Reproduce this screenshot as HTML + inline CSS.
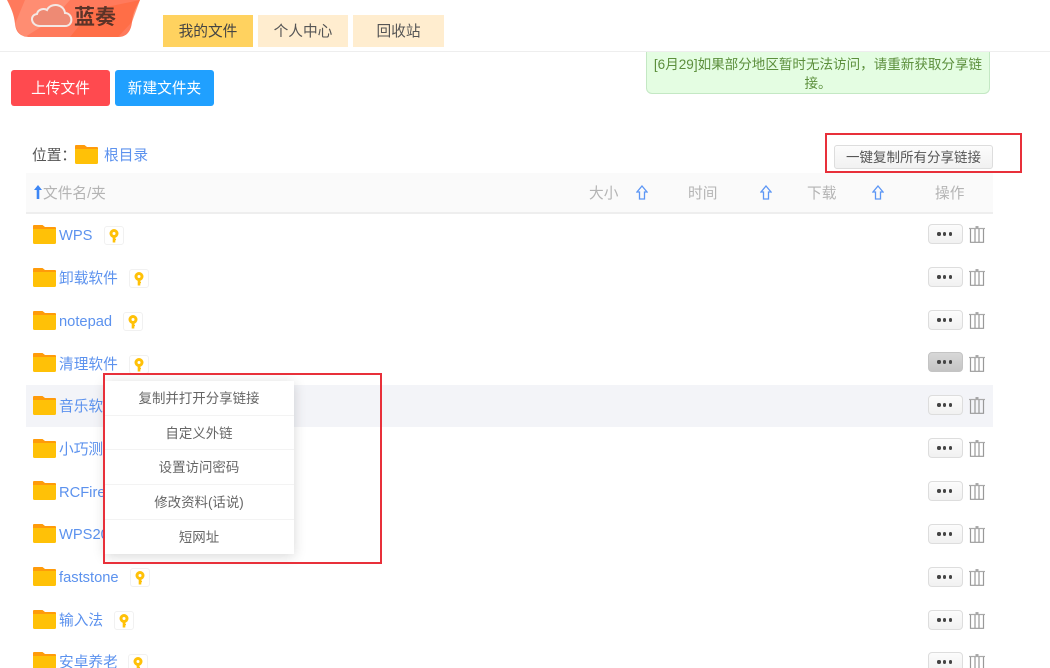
<!DOCTYPE html>
<html lang="zh">
<head>
<meta charset="utf-8">
<style>
html,body{margin:0;padding:0;width:1050px;height:668px;overflow:hidden;background:#fff}
body{position:relative;font-family:"Liberation Sans","Noto Sans CJK SC",sans-serif;font-size:14.7px;color:#444}
.a{position:absolute;white-space:nowrap}
.tab{top:15px;height:32px;line-height:35px;text-align:center;background:#ffedcf;color:#555}
.btn{top:70px;width:99px;height:36px;line-height:38px;text-align:center;color:#fff;border-radius:3px}
.th{top:185px;color:#b4b4b4;line-height:18px}
.arrow{top:185px}
.name{color:#5c92ee;line-height:18px;margin-top:1px}
.folder{left:33px}
.key{width:18px;height:17px;border:1px solid #f1f1f1;border-radius:3px;background:#fff}
.more{left:928px;width:33px;height:18px;border:1px solid #ddd;border-radius:4px;background:linear-gradient(#fcfcfc,#f1f1f1)}
.more i{position:absolute;top:7.3px;width:3.4px;height:3.4px;border-radius:50%;background:#444}
.more i:nth-child(1){left:8.3px}.more i:nth-child(2){left:14px}.more i:nth-child(3){left:20px}
.trash{left:969px}
.pop{left:105px;top:381px;width:189px;height:173px;background:#fff;box-shadow:0 2px 12px rgba(0,0,0,.16)}
.pop div{height:33.7px;line-height:35px;border-bottom:1px solid #f3f3f3;text-align:center;font-size:13.45px;color:#666;text-indent:-1px}
.pop div:last-child{border-bottom:0}
</style>
</head>
<body>
<svg width="0" height="0" style="position:absolute"><defs>
<symbol id="f" viewBox="0 0 23 19"><path d="M0 1Q0 0 1 0H9.500L12 2H22Q23 2 23 3V8H0Z" fill="#ff9b0a"/><path d="M0 4H23V17.500Q23 19 21.500 19H1.500Q0 19 0 17.500Z" fill="#ffc107"/></symbol>
<symbol id="k" viewBox="0 0 18 17"><circle cx="9" cy="6.500" r="3" fill="none" stroke="#ffc107" stroke-width="3"/><path d="M9 9V15.500" stroke="#ffc107" stroke-width="2.600"/><path d="M9 12.500H11" stroke="#ffc107" stroke-width="1.400"/></symbol>
<symbol id="t" viewBox="0 0 16 17"><path d="M0 2.500H16" fill="none" stroke="#aaa" stroke-width="1.200"/><path d="M6.500 1H9.500" fill="none" stroke="#888" stroke-width="1.400"/><path d="M1.500 3V16.300H14.500V3M6 3V16.300M10 3V16.300" fill="none" stroke="#999" stroke-width="1.200"/></symbol>
</defs></svg>

<svg class="a" style="left:0;top:0" width="145" height="40" viewBox="0 0 145 40">
<path d="M7 0H140C136 8 133 12 132 22C131 32 126 37 118 37H30C21 37 16 33 15 24C14 14 11 8 7 0Z" fill="#ff7a5c"/>
<path d="M25 0L70 0L52 20L25 37Q17 33 15 24Z" fill="#ff9a80" opacity=".6"/>
<path d="M70 37L92 10L140 0L132 22L118 37Z" fill="#ff6a3f" opacity=".7"/>
<path d="M40 26C31 26 29 15 37 14C38 9 44 8 47 10C51 2 64 4 65 13C73 13 74 26 65 26Z" fill="#ee8a74" stroke="#f4e8e4" stroke-width="2"/>
<text x="74" y="24" font-family="Liberation Sans,Noto Sans CJK SC,sans-serif" font-size="21" font-weight="700" fill="#5c3328">蓝奏</text>
</svg>
<div class="a" style="left:0;top:51px;width:1050px;height:1px;background:#eee"></div>

<div class="a tab" style="left:163px;width:90px;background:#ffd25f;color:#444">我的文件</div>
<div class="a tab" style="left:258px;width:90px">个人中心</div>
<div class="a tab" style="left:353px;width:91px">回收站</div>

<div class="a btn" style="left:11px;background:#ff4a4f">上传文件</div>
<div class="a btn" style="left:115px;background:#20a0ff">新建文件夹</div>

<div class="a" style="left:646px;top:52px;width:342px;height:41px;background:#e4fde2;border:1px solid #c4e8c4;border-top:0;border-radius:0 0 6px 6px;color:#5c8f3c;font-size:13.55px;line-height:19px;text-align:center;white-space:normal"><div style="padding:3px 6px 0">[6月29]如果部分地区暂时无法访问，请重新获取分享链接。</div></div>

<div class="a" style="left:32px;top:147px;line-height:18px;color:#555">位置：</div>
<svg class="a" style="left:75px;top:145px" width="23" height="19"><use href="#f"/></svg>
<div class="a name" style="left:104px;top:146px">根目录</div>

<div class="a" style="left:834px;top:145px;width:157px;height:22px;line-height:23px;border:1px solid #ddd;border-radius:3px;background:linear-gradient(#fcfcfc,#f1f1f1);text-align:center;font-size:13.5px;color:#555">一键复制所有分享链接</div>
<div class="a" style="left:825px;top:133px;width:193px;height:36px;border:2px solid #e8303a"></div>

<div class="a" style="left:26px;top:173px;width:967px;height:39px;background:#fafafa;border-bottom:2px solid #eee"></div>
<svg class="a" style="left:34px;top:185px" width="8" height="14" viewBox="0 0 8 14"><path d="M4 0L8 5H5.300V14H2.700V5H0Z" fill="#3d86f5"/></svg>
<div class="a th" style="left:43px">文件名/夹</div>
<div class="a th" style="left:589px">大小</div>
<div class="a th" style="left:688px">时间</div>
<div class="a th" style="left:807px">下载</div>
<div class="a th" style="left:935px">操作</div>
<svg class="a arrow" style="left:636px" width="12" height="15" viewBox="0 0 12 15"><path d="M6 1L11 7H8.500V14H3.500V7H1Z" fill="none" stroke="#5c96f5" stroke-width="1.300"/></svg>
<svg class="a arrow" style="left:760px" width="12" height="15" viewBox="0 0 12 15"><path d="M6 1L11 7H8.500V14H3.500V7H1Z" fill="none" stroke="#5c96f5" stroke-width="1.300"/></svg>
<svg class="a arrow" style="left:872px" width="12" height="15" viewBox="0 0 12 15"><path d="M6 1L11 7H8.500V14H3.500V7H1Z" fill="none" stroke="#5c96f5" stroke-width="1.300"/></svg>

<div class="a" style="left:26px;top:385px;width:967px;height:42px;background:#f3f4f8"></div>

<!-- rows -->
<svg class="a folder" style="top:225px" width="23" height="19"><use href="#f"/></svg>
<div class="a name" style="left:59px;top:226px">WPS</div>
<div class="a key" style="left:104px;top:226px"><svg width="18" height="17"><use href="#k"/></svg></div>

<svg class="a folder" style="top:268px" width="23" height="19"><use href="#f"/></svg>
<div class="a name" style="left:59px;top:269px">卸载软件</div>
<div class="a key" style="left:129px;top:269px"><svg width="18" height="17"><use href="#k"/></svg></div>

<svg class="a folder" style="top:311px" width="23" height="19"><use href="#f"/></svg>
<div class="a name" style="left:59px;top:312px">notepad</div>
<div class="a key" style="left:123px;top:312px"><svg width="18" height="17"><use href="#k"/></svg></div>

<svg class="a folder" style="top:353px" width="23" height="19"><use href="#f"/></svg>
<div class="a name" style="left:59px;top:355px">清理软件</div>
<div class="a key" style="left:129px;top:355px"><svg width="18" height="17"><use href="#k"/></svg></div>

<svg class="a folder" style="top:396px" width="23" height="19"><use href="#f"/></svg>
<div class="a name" style="left:59px;top:397px">音乐软件</div>

<svg class="a folder" style="top:439px" width="23" height="19"><use href="#f"/></svg>
<div class="a name" style="left:59px;top:440px">小巧测试</div>

<svg class="a folder" style="top:481px" width="23" height="19"><use href="#f"/></svg>
<div class="a name" style="left:59px;top:483px">RCFire</div>

<svg class="a folder" style="top:524px" width="23" height="19"><use href="#f"/></svg>
<div class="a name" style="left:59px;top:525px">WPS20</div>

<svg class="a folder" style="top:567px" width="23" height="19"><use href="#f"/></svg>
<div class="a name" style="left:59px;top:568px">faststone</div>
<div class="a key" style="left:130px;top:568px"><svg width="18" height="17"><use href="#k"/></svg></div>

<svg class="a folder" style="top:610px" width="23" height="19"><use href="#f"/></svg>
<div class="a name" style="left:59px;top:611px">输入法</div>
<div class="a key" style="left:114px;top:611px"><svg width="18" height="17"><use href="#k"/></svg></div>

<svg class="a folder" style="top:652px" width="23" height="19"><use href="#f"/></svg>
<div class="a name" style="left:59px;top:653px">安卓养老</div>
<div class="a key" style="left:128px;top:654px"><svg width="18" height="17"><use href="#k"/></svg></div>

<div class="a more" style="top:224px"><i></i><i></i><i></i></div><svg class="a trash" style="top:226px" width="16" height="17"><use href="#t"/></svg>
<div class="a more" style="top:267px"><i></i><i></i><i></i></div><svg class="a trash" style="top:269px" width="16" height="17"><use href="#t"/></svg>
<div class="a more" style="top:310px"><i></i><i></i><i></i></div><svg class="a trash" style="top:312px" width="16" height="17"><use href="#t"/></svg>
<div class="a more" style="top:352px;background:linear-gradient(#d8d8d8,#c4c4c4);border-color:#c4c4c4"><i></i><i></i><i></i></div><svg class="a trash" style="top:355px" width="16" height="17"><use href="#t"/></svg>
<div class="a more" style="top:395px"><i></i><i></i><i></i></div><svg class="a trash" style="top:397px" width="16" height="17"><use href="#t"/></svg>
<div class="a more" style="top:438px"><i></i><i></i><i></i></div><svg class="a trash" style="top:440px" width="16" height="17"><use href="#t"/></svg>
<div class="a more" style="top:481px"><i></i><i></i><i></i></div><svg class="a trash" style="top:483px" width="16" height="17"><use href="#t"/></svg>
<div class="a more" style="top:524px"><i></i><i></i><i></i></div><svg class="a trash" style="top:526px" width="16" height="17"><use href="#t"/></svg>
<div class="a more" style="top:567px"><i></i><i></i><i></i></div><svg class="a trash" style="top:569px" width="16" height="17"><use href="#t"/></svg>
<div class="a more" style="top:610px"><i></i><i></i><i></i></div><svg class="a trash" style="top:612px" width="16" height="17"><use href="#t"/></svg>
<div class="a more" style="top:652px"><i></i><i></i><i></i></div><svg class="a trash" style="top:654px" width="16" height="17"><use href="#t"/></svg>

<div class="a pop">
<div>复制并打开分享链接</div>
<div>自定义外链</div>
<div>设置访问密码</div>
<div>修改资料(话说)</div>
<div>短网址</div>
</div>
<div class="a" style="left:103px;top:373px;width:275px;height:187px;border:2px solid #e8303a"></div>
</body>
</html>
